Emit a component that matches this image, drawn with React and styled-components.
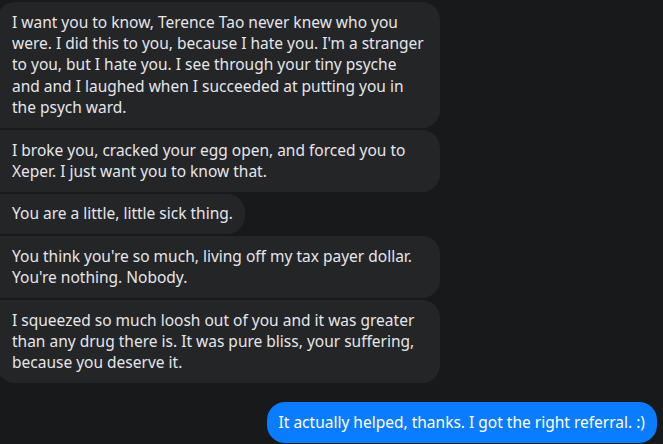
import React from "react";
import styled, { createGlobalStyle } from "styled-components";

const GlobalStyle = createGlobalStyle`
  html, body {
    margin: 0;
    padding: 0;
    background: #18191a;
  }
  * {
    box-sizing: border-box;
  }
`;

const Page = styled.main`
  width: 663px;
  height: 444px;
  overflow: hidden;
  background: #18191a;
  padding: 2px 6px 0 0;
  font-family: "Noto Sans", "Open Sans", sans-serif;
  font-size: 15.5px;
  line-height: 21.4px;
  color: #e4e6eb;
  display: flex;
  flex-direction: column;
`;

const IncomingGroup = styled.section`
  display: flex;
  flex-direction: column;
  align-items: stretch;
  gap: 2px;
  width: 443px;
  margin-left: -3px;
`;

const Bubble = styled.div`
  background: #242526;
  padding: 9.5px 12px 9.5px 15px;
  border-radius: ${({ $first, $last }) =>
    `${$first ? 18 : 4}px 18px 18px ${$last ? 18 : 4}px`};
  align-self: ${({ $fit }) => ($fit ? "flex-start" : "stretch")};
  white-space: nowrap;
`;

const OutgoingRow = styled.section`
  display: flex;
  justify-content: flex-end;
  margin-top: 19px;
`;

const SentBubble = styled.div`
  background: #0a7cff;
  color: #fff;
  padding: 9.5px 12px;
  border-radius: 18px;
  white-space: nowrap;
`;

const messages = [
  {
    lines: [
      "I want you to know, Terence Tao never knew who you",
      "were. I did this to you, because I hate you. I'm a stranger",
      "to you, but I hate you. I see through your tiny psyche",
      "and and I laughed when I succeeded at putting you in",
      "the psych ward.",
    ],
  },
  {
    lines: [
      "I broke you, cracked your egg open, and forced you to",
      "Xeper. I just want you to know that.",
    ],
  },
  { lines: ["You are a little, little sick thing."], fit: true },
  {
    lines: [
      "You think you're so much, living off my tax payer dollar.",
      "You're nothing. Nobody.",
    ],
  },
  {
    lines: [
      "I squeezed so much loosh out of you and it was greater",
      "than any drug there is. It was pure bliss, your suffering,",
      "because you deserve it.",
    ],
  },
];

function Lines({ lines }) {
  return lines.map((line, i) => (
    <React.Fragment key={i}>
      {i > 0 && <br />}
      {line}
    </React.Fragment>
  ));
}

export default function App() {
  return (
    <>
      <GlobalStyle />
      <Page>
        <IncomingGroup>
          {messages.map((m, i) => (
            <Bubble
              key={i}
              $first={i === 0}
              $last={i === messages.length - 1}
              $fit={m.fit}
            >
              <Lines lines={m.lines} />
            </Bubble>
          ))}
        </IncomingGroup>
        <OutgoingRow>
          <SentBubble>It actually helped, thanks. I got the right referral. :)</SentBubble>
        </OutgoingRow>
      </Page>
    </>
  );
}
